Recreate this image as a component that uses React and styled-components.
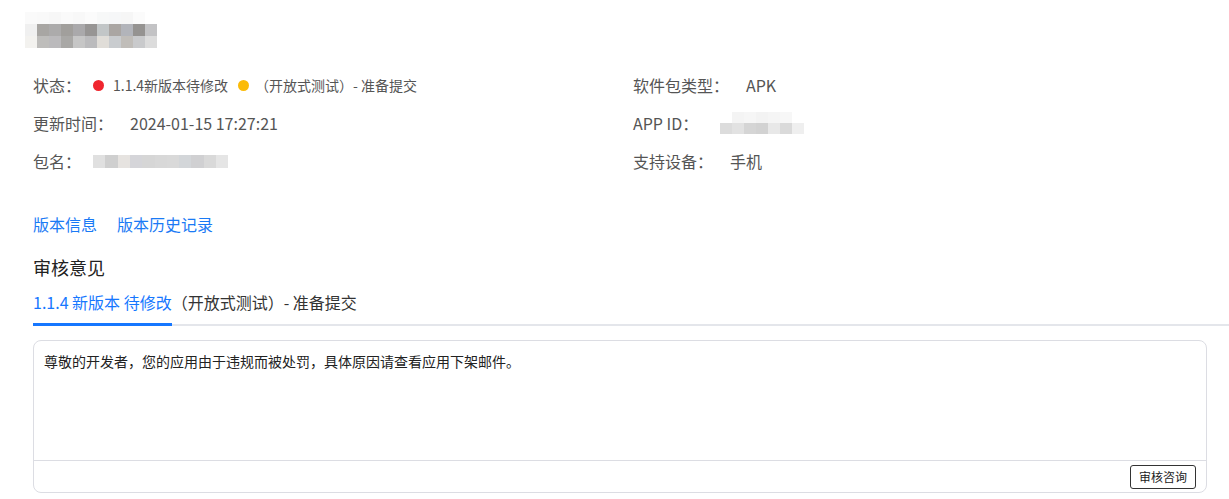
import styled, { createGlobalStyle } from "styled-components";

const GlobalStyle = createGlobalStyle`
  html, body {
    margin: 0;
    padding: 0;
    background: #ffffff;
  }
  body {
    font-family: "Noto Sans CJK SC", "Noto Sans", sans-serif;
    color: #333;
  }
`;

const Page = styled.div`
  padding: 12px 22px 0 33px;
  width: 1229px;
  box-sizing: border-box;
  overflow: hidden;
`;

// pixelated (masked) text blocks
const Mosaic = styled.div`
  display: grid;
  grid-template-columns: repeat(${(p) => p.$cols}, ${(p) => p.$cell}px);
  grid-auto-rows: ${(p) => p.$row}px;
  margin-left: ${(p) => p.$shift || 0}px;
`;

const Cell = styled.span`
  display: block;
  background: ${(p) => p.$c};
`;

const InfoGrid = styled.div`
  display: grid;
  grid-template-columns: 600px 1fr;
  grid-auto-rows: 38px;
  margin-top: 18px;
`;

const InfoItem = styled.div`
  display: flex;
  align-items: center;
  font-size: 16px;
  color: #555;
`;

const Label = styled.span`
  flex: 0 0 auto;
  margin-right: ${(p) => p.$gap}px;
  line-height: 22px;
`;

const Value = styled.span`
  line-height: 22px;
  color: #555;
`;

const Status = styled.div`
  display: flex;
  align-items: center;
  font-size: 14px;
  color: #555;
  line-height: 20px;
`;

const Dot = styled.span`
  width: 11px;
  height: 11px;
  border-radius: 50%;
  background: ${(p) => p.$color};
  margin-right: ${(p) => p.$gap}px;
`;

const StatusText = styled.span`
  margin-right: 10px;
`;

const Links = styled.div`
  display: flex;
  gap: 20px;
  margin-top: 32px;
`;

const Link = styled.a`
  font-size: 16px;
  line-height: 24px;
  color: #1a7af5;
  text-decoration: none;
  cursor: pointer;
`;

const SectionTitle = styled.h3`
  margin: 18px 0 0;
  font-size: 18px;
  font-weight: 400;
  line-height: 26px;
  color: #222;
`;

const TabBar = styled.div`
  display: flex;
  align-items: flex-end;
  margin-top: 10px;
  margin-right: -22px;
  border-bottom: 2px solid #e4e6eb;
`;

const Tab = styled.div`
  padding-bottom: 9px;
  margin-bottom: -2px;
  border-bottom: 3px solid #1677ff;
  font-size: 16px;
  line-height: 24px;
  color: #1677ff;
  cursor: pointer;
`;

const TabRest = styled.div`
  padding-bottom: 10px;
  font-size: 16px;
  line-height: 24px;
  color: #333;
`;

const Card = styled.div`
  margin-top: 14px;
  border: 1px solid #dcdde3;
  border-radius: 8px;
  display: flex;
  flex-direction: column;
`;

const CardBody = styled.div`
  height: 120px;
  box-sizing: border-box;
  padding: 10px 10px;
  font-size: 14px;
  line-height: 20px;
  color: #222;
  border-bottom: 1px solid #dcdde3;
`;

const CardFooter = styled.div`
  display: flex;
  justify-content: flex-end;
  padding: 4px 10px 3px;
`;

const Button = styled.button`
  height: 24px;
  padding: 0 8px;
  border: 1px solid #333;
  border-radius: 3px;
  background: #fff;
  font-family: inherit;
  font-size: 12px;
  line-height: 22px;
  color: #222;
  cursor: pointer;
`;

const titleCells = [
  "#fafafa", "#f9f9f9", "#f7f7f7", "#fafafa", "#f8f8f8", "#fbfbfb", "#f7f8f8", "#f6f7f8", "#f6f6f6", "#fbfbfb", "#ffffff",
  "#f0f0f0", "#a8a6a3", "#acabab", "#a19f9c", "#aaa9ab", "#979594", "#c2c6c7", "#aaa6a3", "#b2b4ba", "#959391", "#c3c3c5",
  "#f3f2ef", "#bebdbb", "#bbbabc", "#a9a8a6", "#c6c6c6", "#bbbbbd", "#e0ddd8", "#c9cccf", "#c0bdb9", "#c9cacc", "#dcdcdc",
];

const packageCells = [
  "#e0e0e0", "#cfcfcf", "#e6e3e0", "#d5d5d9", "#d6d6d6", "#d8d8d8", "#d9d9d9", "#d3d6d9", "#d0d0d2", "#d9d9d9", "#e5e5e5",
];

const appIdCells = [
  "#ffffff", "#f4f4f4", "#f6f6f6", "#f3f3f3", "#f5f5f5", "#f7f7f7", "#ffffff",
  "#dcdcdc", "#e2e2e2", "#d5d5d5", "#d2d2d2", "#e8e8e8", "#dadada", "#efefef",
];

const Masked = ({ cells, cols, cell = 12, row = 12, shift }) => (
  <Mosaic $cols={cols} $cell={cell} $row={row} $shift={shift}>
    {cells.map((c, i) => (
      <Cell key={i} $c={c} />
    ))}
  </Mosaic>
);

const App = () => {
  return (
    <>
      <GlobalStyle />
      <Page>
        <Masked cells={titleCells} cols={11} shift={-8} />

        <InfoGrid>
          <InfoItem>
            <Label $gap={12}>状态：</Label>
            <Status>
              <Dot $color="#f0262f" $gap={9} />
              <StatusText>1.1.4新版本待修改</StatusText>
              <Dot $color="#fbbb08" $gap={6} />
              <span>（开放式测试）- 准备提交</span>
            </Status>
          </InfoItem>
          <InfoItem>
            <Label $gap={17}>软件包类型：</Label>
            <Value>APK</Value>
          </InfoItem>
          <InfoItem>
            <Label $gap={17}>更新时间：</Label>
            <Value>2024-01-15 17:27:21</Value>
          </InfoItem>
          <InfoItem>
            <Label $gap={22}>APP ID：</Label>
            <Masked cells={appIdCells} cols={7} row={11} />
          </InfoItem>
          <InfoItem>
            <Label $gap={12}>包名：</Label>
            <Masked cells={packageCells} cols={11} row={13} cell={12.3} />
          </InfoItem>
          <InfoItem>
            <Label $gap={17}>支持设备：</Label>
            <Value>手机</Value>
          </InfoItem>
        </InfoGrid>

        <Links>
          <Link>版本信息</Link>
          <Link>版本历史记录</Link>
        </Links>

        <SectionTitle>审核意见</SectionTitle>

        <TabBar>
          <Tab>1.1.4 新版本 待修改</Tab>
          <TabRest>（开放式测试）- 准备提交</TabRest>
        </TabBar>

        <Card>
          <CardBody>
            尊敬的开发者，您的应用由于违规而被处罚，具体原因请查看应用下架邮件。
          </CardBody>
          <CardFooter>
            <Button>审核咨询</Button>
          </CardFooter>
        </Card>
      </Page>
    </>
  );
};

export default App;
